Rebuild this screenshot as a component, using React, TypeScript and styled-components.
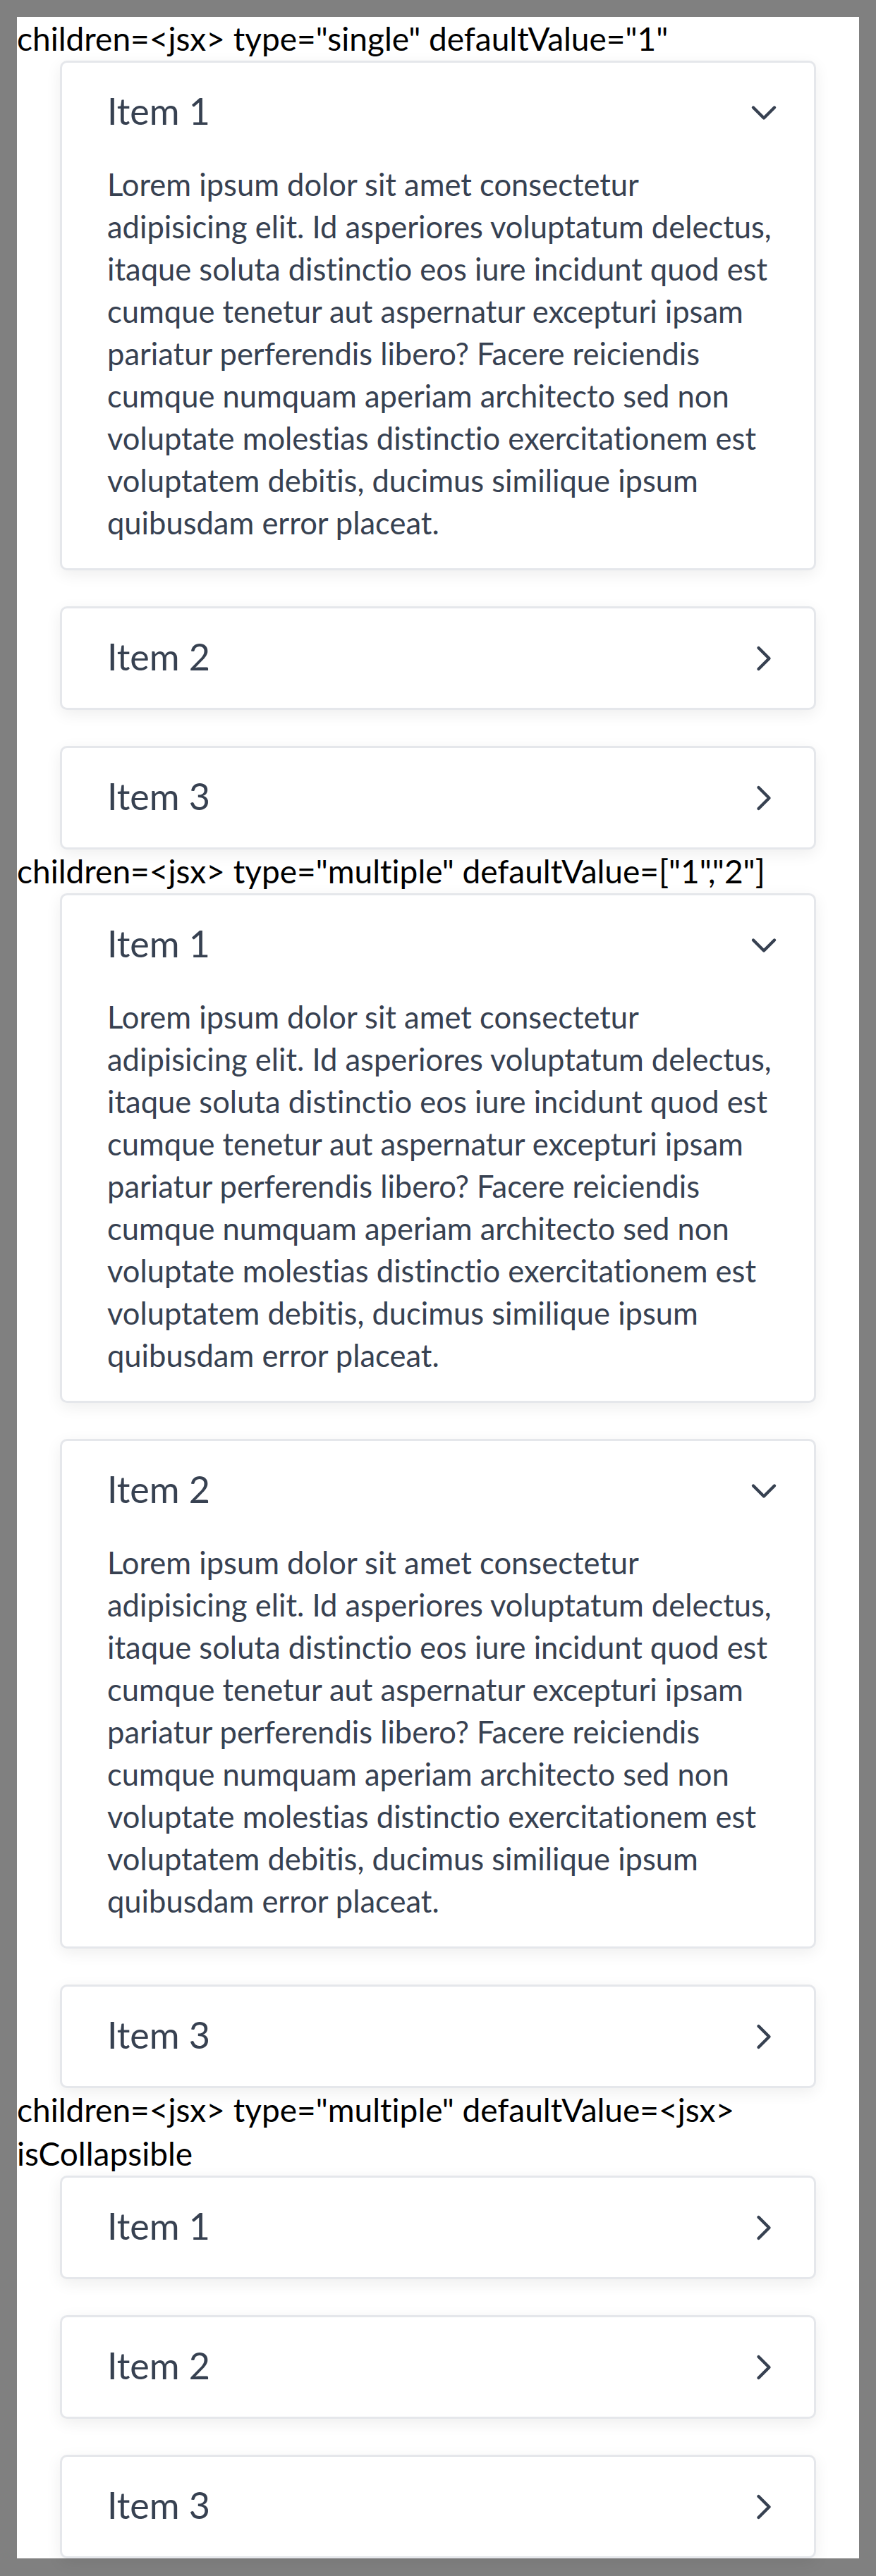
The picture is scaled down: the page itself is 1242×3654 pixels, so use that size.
import React, { useState } from "react";
import styled, { createGlobalStyle } from "styled-components";
import { ChevronDown, ChevronRight } from "lucide-react";

const GlobalStyle = createGlobalStyle`
  html, body {
    margin: 0;
    padding: 0;
  }
  body {
    background: #808080;
    padding: 24px;
    font-family: Lato, "Liberation Sans", sans-serif;
    font-variant-ligatures: none;
  }
`;

const Page = styled.div`
  background: #ffffff;
  display: flex;
  flex-direction: column;
`;

const Section = styled.section`
  display: flex;
  flex-direction: column;
`;

const StoryLabel = styled.div`
  font-family: Lato, "Liberation Sans", sans-serif;
  font-size: 46px;
  line-height: 62px;
  color: #000000;
  font-variant-ligatures: none;
`;

const AccordionList = styled.div`
  display: flex;
  flex-direction: column;
  gap: 51px;
  padding: 0 61px;
`;

const Card = styled.div`
  background: #ffffff;
  border: 3px solid #e5e7eb;
  border-radius: 10px;
  box-shadow: 0 6px 22px rgba(0, 0, 0, 0.07);
  overflow: hidden;
`;

const Header = styled.button`
  all: unset;
  box-sizing: border-box;
  width: 100%;
  height: 141px;
  display: flex;
  align-items: center;
  justify-content: space-between;
  padding: 0 41px 0 64px;
  cursor: pointer;
  color: #374151;
`;

const Title = styled.span`
  font-family: Lato, "Liberation Sans", sans-serif;
  font-size: 52px;
  line-height: 1;
  margin-bottom: 6px;
  color: #374151;
  font-variant-ligatures: none;
`;

const IconBox = styled.span`
  display: flex;
  width: 60px;
  height: 60px;
  color: #374151;
`;

const Content = styled.div`
  padding: 1px 0 35px 64px;
`;

const Body = styled.p`
  margin: 0;
  max-width: 950px;
  font-family: Lato, "Liberation Sans", sans-serif;
  font-size: 43.5px;
  line-height: 60px;
  color: #374151;
  font-variant-ligatures: none;
`;

const LOREM =
  "Lorem ipsum dolor sit amet consectetur adipisicing elit. Id asperiores voluptatum delectus, itaque soluta distinctio eos iure incidunt quod est cumque tenetur aut aspernatur excepturi ipsam pariatur perferendis libero? Facere reiciendis cumque numquam aperiam architecto sed non voluptate molestias distinctio exercitationem est voluptatem debitis, ducimus similique ipsum quibusdam error placeat.";

const ITEMS = [
  { value: "1", title: "Item 1" },
  { value: "2", title: "Item 2" },
  { value: "3", title: "Item 3" },
];

type AccordionProps = {
  type: "single" | "multiple";
  defaultValue: string[];
  collapsible?: boolean;
};

function Accordion({ type, defaultValue, collapsible }: AccordionProps) {
  const [open, setOpen] = useState<string[]>(defaultValue);

  const toggle = (v: string) => {
    setOpen((prev) => {
      const isOpen = prev.includes(v);
      if (type === "single") {
        if (isOpen) return collapsible ? [] : prev;
        return [v];
      }
      return isOpen ? prev.filter((x) => x !== v) : [...prev, v];
    });
  };

  return (
    <AccordionList>
      {ITEMS.map((item) => {
        const isOpen = open.includes(item.value);
        return (
          <Card key={item.value}>
            <Header type="button" aria-expanded={isOpen} onClick={() => toggle(item.value)}>
              <Title>{item.title}</Title>
              <IconBox>
                {isOpen ? (
                  <ChevronDown size={60} strokeWidth={1.75} />
                ) : (
                  <ChevronRight size={60} strokeWidth={1.75} />
                )}
              </IconBox>
            </Header>
            {isOpen && (
              <Content>
                <Body>{LOREM}</Body>
              </Content>
            )}
          </Card>
        );
      })}
    </AccordionList>
  );
}

export default function App() {
  return (
    <>
      <GlobalStyle />
      <Page>
        <Section>
          <StoryLabel>children=&lt;jsx&gt; type="single" defaultValue="1"</StoryLabel>
          <Accordion type="single" defaultValue={["1"]} />
        </Section>
        <Section>
          <StoryLabel>children=&lt;jsx&gt; type="multiple" defaultValue=["1","2"]</StoryLabel>
          <Accordion type="multiple" defaultValue={["1", "2"]} />
        </Section>
        <Section>
          <StoryLabel>
            children=&lt;jsx&gt; type="multiple" defaultValue=&lt;jsx&gt; isCollapsible
          </StoryLabel>
          <Accordion type="multiple" defaultValue={[]} collapsible />
        </Section>
      </Page>
    </>
  );
}
